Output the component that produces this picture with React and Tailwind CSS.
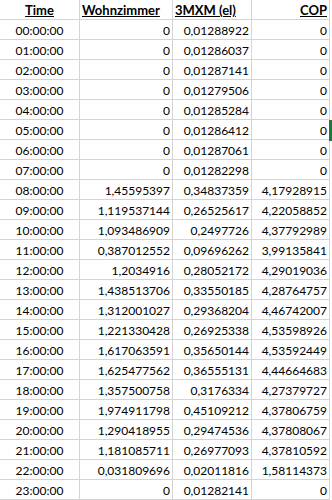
import React from "react";

const rows = [
  ["00:00:00", "0", "0,01288922", "0"],
  ["01:00:00", "0", "0,01286037", "0"],
  ["02:00:00", "0", "0,01287141", "0"],
  ["03:00:00", "0", "0,01279506", "0"],
  ["04:00:00", "0", "0,01285284", "0"],
  ["05:00:00", "0", "0,01286412", "0"],
  ["06:00:00", "0", "0,01287061", "0"],
  ["07:00:00", "0", "0,01282298", "0"],
  ["08:00:00", "1,45595397", "0,34837359", "4,17928915"],
  ["09:00:00", "1,119537144", "0,26525617", "4,22058852"],
  ["10:00:00", "1,093486909", "0,2497726", "4,37792989"],
  ["11:00:00", "0,387012552", "0,09696262", "3,99135841"],
  ["12:00:00", "1,2034916", "0,28052172", "4,29019036"],
  ["13:00:00", "1,438513706", "0,33550185", "4,28764757"],
  ["14:00:00", "1,312001027", "0,29368204", "4,46742007"],
  ["15:00:00", "1,221330428", "0,26925338", "4,53598926"],
  ["16:00:00", "1,617063591", "0,35650144", "4,53592449"],
  ["17:00:00", "1,625477562", "0,36555131", "4,44664683"],
  ["18:00:00", "1,357500758", "0,3176334", "4,27379727"],
  ["19:00:00", "1,974911798", "0,45109212", "4,37806759"],
  ["20:00:00", "1,290418955", "0,29474536", "4,37808067"],
  ["21:00:00", "1,181085711", "0,26977093", "4,37810592"],
  ["22:00:00", "0,031809696", "0,02011816", "1,58114373"],
  ["23:00:00", "0", "0,01282141", "0"],
];

const cell =
  "h-5 flex items-end pb-[2px] border-r border-b border-[#d4d4d4] leading-none whitespace-nowrap overflow-hidden";

const App = () => {
  return (
    <div className="relative w-[332px] h-[500px] overflow-hidden bg-white text-black text-[12px] font-['Lato',sans-serif]">
      <div className="grid grid-cols-[80px_93px_79px_78px]">
        {/* header */}
        <div className={`${cell} justify-center font-bold underline text-[13px]`}>Time</div>
        <div className={`${cell} justify-start pl-[2px] font-bold underline text-[13px]`}>Wohnzimmer</div>
        <div className={`${cell} justify-start pl-[2px] font-bold underline text-[13px]`}>3MXM (el)</div>
        <div className={`${cell} justify-end pr-[2px] font-bold underline text-[13px]`}>COP</div>

        {rows.map((r, i) => (
          <React.Fragment key={i}>
            <div className={`${cell} justify-center`}>{r[0]}</div>
            <div className={`${cell} justify-end pr-[2px]`}>{r[1]}</div>
            <div className={`${cell} justify-end pr-[2px]`}>{r[2]}</div>
            <div className={`${cell} justify-end pr-[2px]`}>{r[3]}</div>
          </React.Fragment>
        ))}
      </div>

      {/* selected cell edge */}
      <div className="absolute left-[329px] top-[120px] w-[3px] h-[21px] bg-[#217346]" />
    </div>
  );
};

export default App;
